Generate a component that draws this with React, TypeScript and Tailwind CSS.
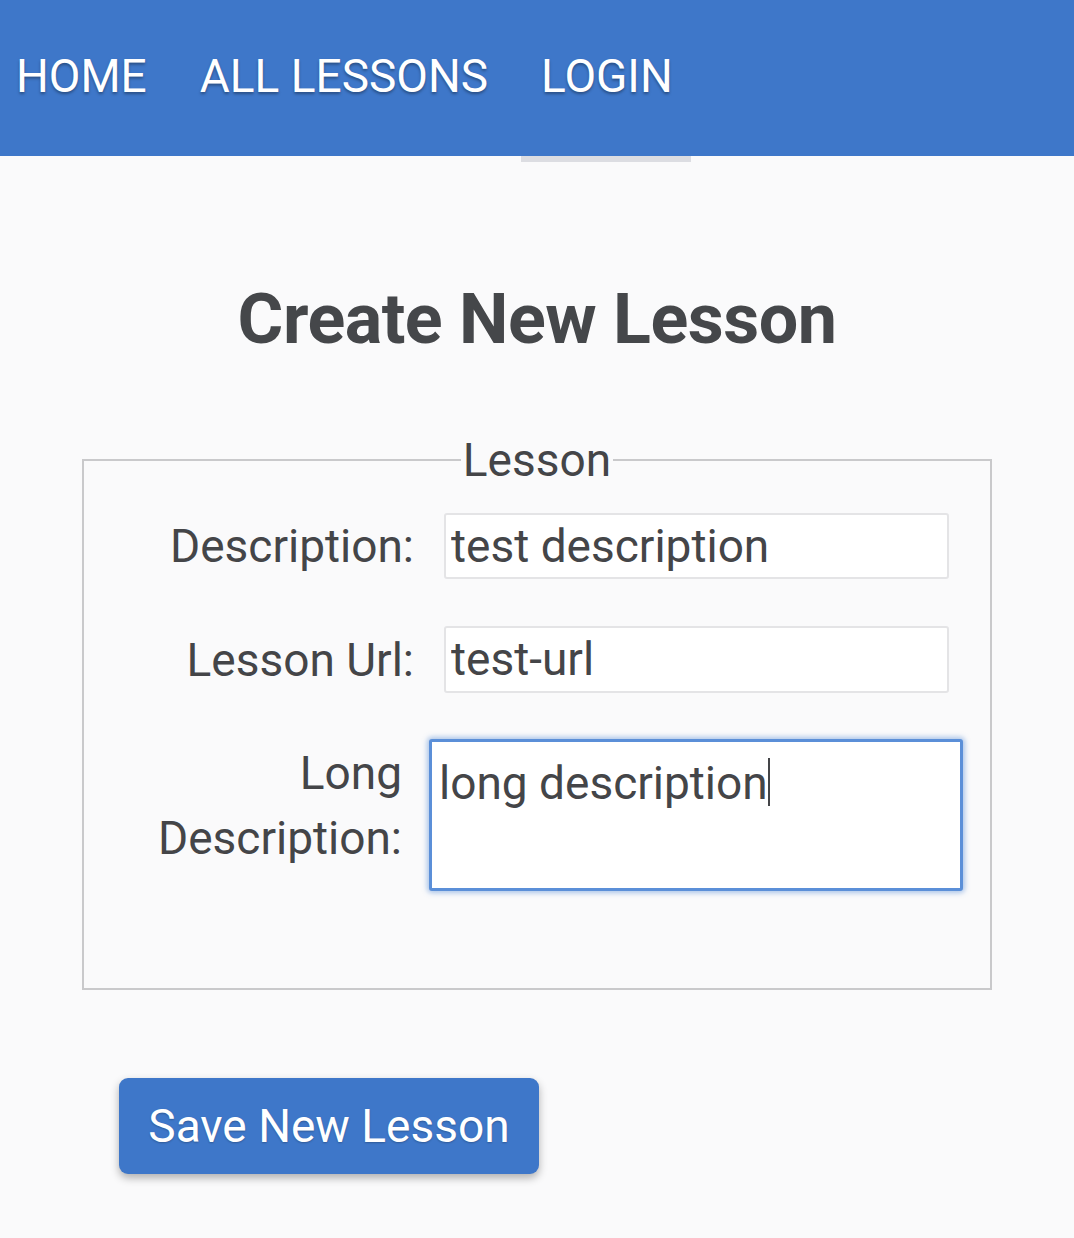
import React from 'react';

const App = () => {
  const navItems = ['HOME', 'ALL LESSONS', 'LOGIN'];

  return (
    <div className="min-h-[1238px] bg-[#fafafb] text-[#444548]" style={{ fontFamily: 'Roboto, "Noto Sans", sans-serif' }}>
      <header className="relative h-[156px] bg-[#3e77c9] flex items-center pl-[16px] pb-[4px] gap-[53px]">
        {navItems.map((item) => (
          <a key={item} className="text-[46px] text-white leading-none [text-shadow:0_2px_3px_rgba(0,0,0,0.35)]">
            {item}
          </a>
        ))}
        <div className="absolute left-[521px] top-[156px] w-[170px] h-[6px] bg-[#dcdde2]" />
      </header>

      <main className="flex flex-col items-center">
        <h1 className="mt-[128px] text-[70px] font-bold leading-none text-[#45474a] tracking-[-0.5px]">
          Create New Lesson
        </h1>

        <fieldset className="mt-[83px] w-[910px] h-[553px] border-2 border-[#c9c9cb] pt-0">
          <legend className="mx-auto px-[2px] text-[46px] leading-none text-[#444548]">Lesson</legend>

          <div className="flex items-center mt-[30px]">
            <label className="w-[330px] text-right text-[46px] leading-none">Description:</label>
            <input
              readOnly
              value="test description"
              className="ml-[30px] w-[505px] h-[66px] bg-white border-2 border-[#e4e4e6] rounded-[3px] px-[5px] text-[46px] text-[#444548] outline-none"
            />
          </div>

          <div className="flex items-center mt-[47px]">
            <label className="w-[330px] text-right text-[46px] leading-none">Lesson Url:</label>
            <input
              readOnly
              value="test-url"
              className="ml-[30px] w-[505px] h-[67px] bg-white border-2 border-[#e4e4e6] rounded-[3px] px-[5px] text-[46px] text-[#444548] outline-none"
            />
          </div>

          <div className="flex items-start mt-[46px]">
            <label className="w-[318px] text-right text-[46px] leading-[65px] mt-[2px]">
              Long
              <br />
              Description:
            </label>
            <div className="ml-[27px] w-[534px] h-[152px] bg-white border-[3px] border-[#5b8fd8] rounded-[3px] shadow-[0_0_5px_2px_rgba(91,143,216,0.5)] px-[7px] pt-[18px] text-[46px] leading-none text-[#444548]">
              long description<span className="inline-block w-[2px] h-[48px] bg-[#444548] align-top -mt-[2px]" />
            </div>
          </div>
        </fieldset>

        <div className="w-full pl-[119px] mt-[88px]">
          <button className="w-[420px] h-[96px] bg-[#3e77c9] rounded-[9px] text-white text-[46px] shadow-[0_4px_8px_rgba(0,0,0,0.3)] [text-shadow:0_1px_2px_rgba(0,0,0,0.25)]">
            Save New Lesson
          </button>
        </div>
      </main>
    </div>
  );
};

export default App;
